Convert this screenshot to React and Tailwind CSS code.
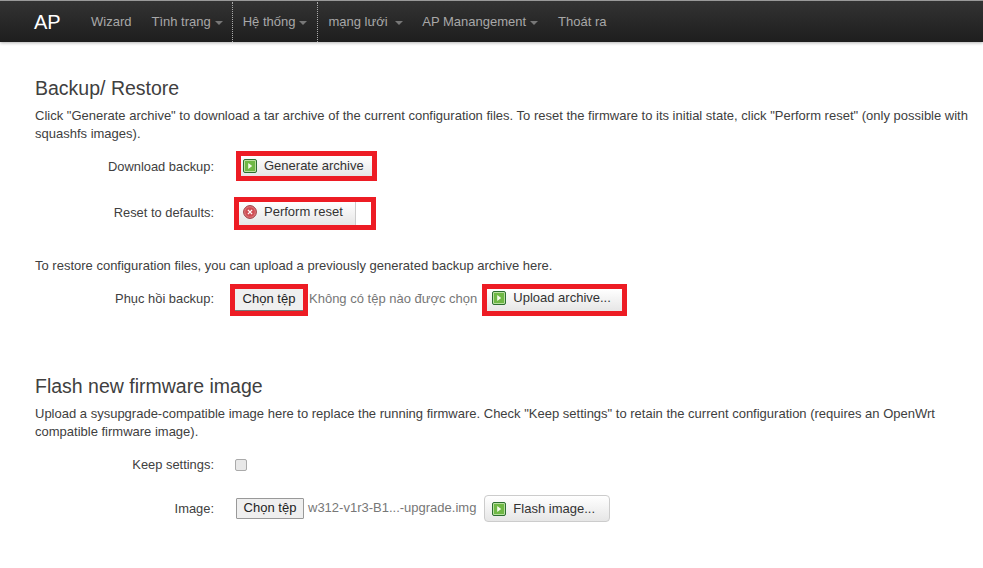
const FF = "font-['Liberation_Sans',Arial,sans-serif]";

function Play() {
  return (
    <svg width="14" height="14" viewBox="0 0 14 14" className="shrink-0">
      <rect x="0.5" y="0.5" width="13" height="13" rx="1.5" fill="#b9dfa0" stroke="#2c6e2f" />
      <rect x="2" y="2" width="10" height="10" fill="#6fb845" />
      <path d="M5.2 4 L9.2 7 L5.2 10 Z" fill="#f4fbe9" />
    </svg>
  );
}

function Cross() {
  return (
    <svg width="14" height="14" viewBox="0 0 14 14" className="shrink-0">
      <circle cx="7" cy="7" r="6.4" fill="#e0787c" stroke="#9c3a40" />
      <circle cx="7" cy="7" r="4.8" fill="#cf4d54" />
      <path d="M4.9 4.9 L9.1 9.1 M9.1 4.9 L4.9 9.1" stroke="#ffffff" strokeWidth="1.3" />
    </svg>
  );
}

function Btn({ icon, children, className = "" }) {
  return (
    <div className={`flex items-center gap-[7px] text-[13px] text-[#333] bg-gradient-to-b from-white to-[#e6e6e6] ${className}`}>
      {icon}
      <span>{children}</span>
    </div>
  );
}

function NavItem({ children, caret, active, wide }) {
  return (
    <div className={`h-full flex items-center gap-[4px] pl-[10px] ${caret && !wide ? "pr-[9px]" : "pr-[10px]"} text-[#a8a8a8] text-[13px] whitespace-pre ${active ? "border-x border-dotted border-[#aaa]" : ""}`}>
      <span>{children}</span>
      {caret && <span className="w-0 h-0 mt-[1px] border-x-[4px] border-x-transparent border-t-[4px] border-t-[#777]" />}
    </div>
  );
}

function Label({ children, className = "" }) {
  return <div className={`w-[179px] text-right shrink-0 text-[#404040] text-[12.9px] ${className}`}>{children}</div>;
}

function Section({ title, children, className = "" }) {
  return (
    <section className={className}>
      <h2 className="text-[19.5px] leading-[24px] text-[#404040]">{title}</h2>
      {children}
    </section>
  );
}

export default function App() {
  return (
    <div className={`${FF} w-[983px] h-[568px] overflow-hidden bg-white text-[#404040]`}>
      <nav className="h-[42px] flex items-stretch pl-[24px] pt-[1px] bg-gradient-to-b from-[#333] to-[#1e1e1e] border-t border-[#999] shadow-[0_1px_3px_rgba(0,0,0,0.3)]">
        <div className="flex items-center text-white text-[20px] w-[57px] pl-[10px]">AP</div>
        <NavItem>Wizard</NavItem>
        <NavItem caret>Tình trạng</NavItem>
        <NavItem caret active wide>Hệ thống</NavItem>
        <NavItem caret>mạng lưới </NavItem>
        <NavItem caret wide>AP Manangement</NavItem>
        <NavItem>Thoát ra</NavItem>
      </nav>

      <main className="pl-[35px]">
        <Section title="Backup/ Restore" className="pt-[34px]">
          <p className="mt-[7px] text-[13px] leading-[18px] w-[938px]">
            Click "Generate archive" to download a tar archive of the current configuration files. To reset the firmware to its initial state, click "Perform reset" (only possible with squashfs images).
          </p>
          <div className="mt-[8px] flex items-center h-[30px]">
            <Label className="pt-[2px]">Download backup:</Label>
            <div className="ml-[22px] border-[5px] border-[#ed1c24] w-[141px] h-[30px]">
              <Btn icon={<Play />} className="h-full pl-[2px]">Generate archive</Btn>
            </div>
          </div>
          <div className="mt-[16px] flex items-center h-[33px]">
            <Label className="pb-[2px]">Reset to defaults:</Label>
            <div className="ml-[20px] border-[5px] border-[#ed1c24] w-[142px] h-[33px] bg-white">
              <Btn icon={<Cross />} className="h-full w-[117px] pl-[4px] pb-[3px] border-r border-[#ccc]">Perform reset</Btn>
            </div>
          </div>
          <p className="mt-[27px] text-[13px] leading-[18px]">
            To restore configuration files, you can upload a previously generated backup archive here.
          </p>
          <div className="mt-[9px] flex items-center h-[32px]">
            <Label className="pb-[2px]">Phục hồi backup:</Label>
            <div className="ml-[16px] border-[5px] border-[#ed1c24] w-[78px] h-[32px]">
              <div className="w-full h-full pb-[2px] flex items-center justify-center text-[13px] text-[#222] bg-[#efefef] border-b border-[#777]">Chọn tệp</div>
            </div>
            <span className="ml-[1px] pb-[3px] text-[13px] text-[#777] whitespace-nowrap">Không có tệp nào được chọn</span>
            <div className="ml-[5px] border-[5px] border-[#ed1c24] w-[145px] h-[32px]">
              <Btn icon={<Play />} className="h-full pl-[5px] pb-[4px]">Upload archive...</Btn>
            </div>
          </div>
        </Section>

        <Section title="Flash new firmware image" className="mt-[58px]">
          <p className="mt-[7px] text-[13px] leading-[18px] w-[938px]">
            Upload a sysupgrade-compatible image here to replace the running firmware. Check "Keep settings" to retain the current configuration (requires an OpenWrt compatible firmware image).
          </p>
          <div className="mt-[14px] flex items-center h-[20px]">
            <Label>Keep settings:</Label>
            <div className="ml-[21px] w-[12px] h-[12px] rounded-[2px] border border-[#aaa] bg-[#e8e8e8]" />
          </div>
          <div className="mt-[20px] flex items-center h-[28px]">
            <Label>Image:</Label>
            <div className="ml-[22px] mb-[2px] w-[68px] h-[21px] flex items-center justify-center text-[13px] text-[#222] bg-[#efefef] border border-[#999] rounded-[1px]">Chọn tệp</div>
            <span className="ml-[4px] pb-[2px] text-[13px] text-[#777] whitespace-nowrap">w312-v1r3-B1...-upgrade.img</span>
            <Btn icon={<Play />} className="ml-[8px] mb-[1px] w-[126px] h-[27px] pl-[7px] border border-[#ccc] rounded-[4px]">Flash image...</Btn>
          </div>
        </Section>
      </main>
    </div>
  );
}
